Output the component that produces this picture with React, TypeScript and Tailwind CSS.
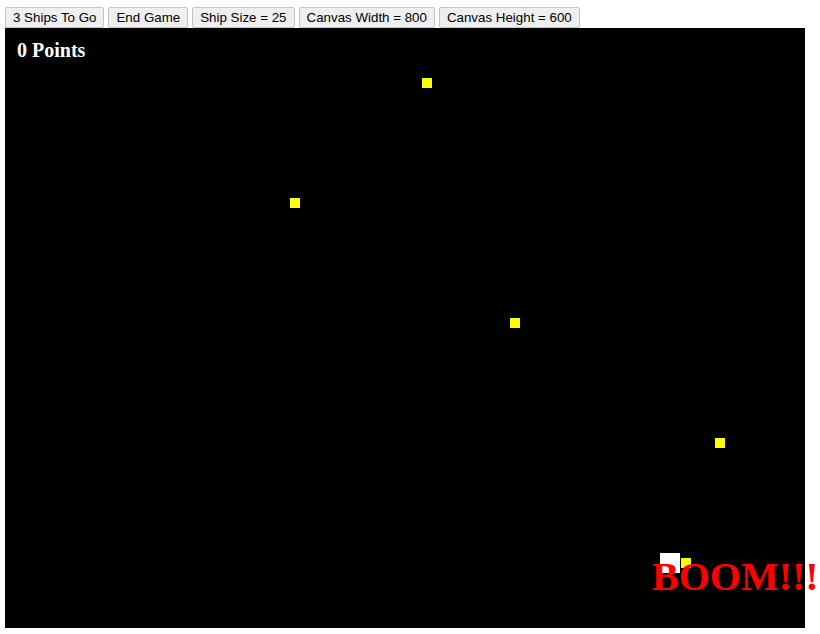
const buttons = [
  "3 Ships To Go",
  "End Game",
  "Ship Size = 25",
  "Canvas Width = 800",
  "Canvas Height = 600",
]

// enemy positions on the 800x600 canvas
const enemies = [
  { x: 417, y: 50 },
  { x: 285, y: 170 },
  { x: 505, y: 290 },
  { x: 710, y: 410 },
  { x: 676, y: 530 },
]

const App = () => {
  return (
    <div className="min-h-[634px] w-[820px] bg-white">
      <div className="flex gap-1 pl-[5px] pt-[7px]">
        {buttons.map((label) => (
          <button
            key={label}
            className="h-[21px] px-[7px] border border-[#c4c4c4] rounded-[2px] bg-[#efefef] text-[13.33px] leading-none text-black font-['Liberation_Sans',Arial,sans-serif]"
          >
            {label}
          </button>
        ))}
      </div>

      <div className="relative ml-[5px] h-[600px] w-[800px] bg-black font-['Liberation_Serif','Times_New_Roman',serif]">
        <div className="absolute left-[12px] top-[12px] text-[20px] leading-none font-bold text-white">
          0 Points
        </div>

        {enemies.map((e, i) => (
          <div
            key={i}
            className="absolute h-[10px] w-[10px] bg-[#ffff00]"
            style={{ left: e.x, top: e.y }}
          />
        ))}

        <div className="absolute left-[655px] top-[525px] h-[20px] w-[20px] bg-white" />

        <div className="absolute left-[647px] top-[529px] whitespace-nowrap text-[40px] leading-none font-bold text-[#ff0000]">
          BOOM!!!
        </div>
      </div>
    </div>
  )
}

export default App
